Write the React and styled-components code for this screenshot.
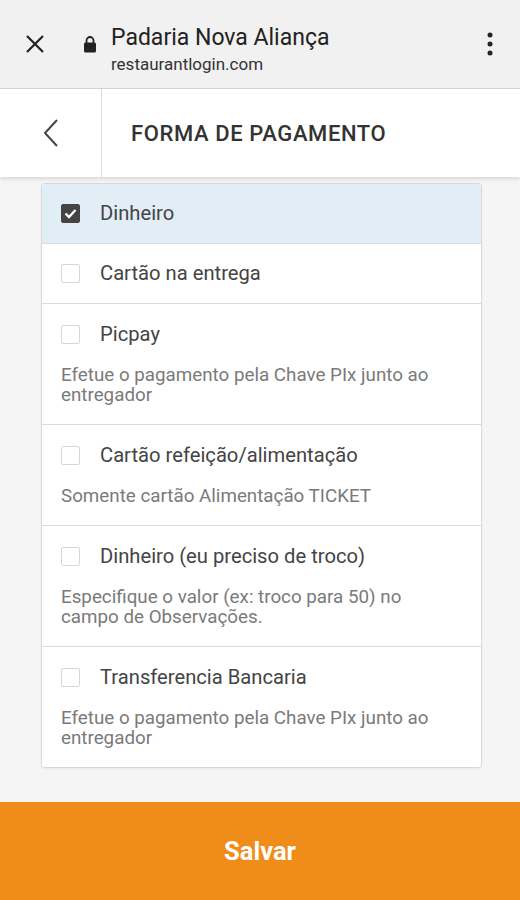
import React, { useState } from "react";
import styled, { createGlobalStyle } from "styled-components";

const Global = createGlobalStyle`
  html, body { margin: 0; padding: 0; }
  body { font-family: Roboto, "Noto Sans", Arial, sans-serif; background: #f5f5f5; }
  * { box-sizing: border-box; }
`;

const Page = styled.div`
  width: 520px;
  height: 900px;
  display: flex;
  flex-direction: column;
  background: #f5f5f5;
  overflow: hidden;
`;

const BrowserBar = styled.div`
  height: 89px;
  flex: none;
  background: #f1f1f1;
  border-bottom: 1px solid #d6d6d6;
  display: flex;
  align-items: center;
  padding: 0 0 0 22px;
`;

const IconBtn = styled.div`
  width: ${(p) => p.$w || 26}px;
  margin-left: ${(p) => p.$ml || 0}px;
  display: flex;
  align-items: center;
  justify-content: center;
  flex: none;
`;

const TitleBlock = styled.div`
  display: flex;
  flex-direction: column;
  margin-left: 8px;
  flex: 1;
  padding-top: 12px;
`;

const SiteTitle = styled.div`
  font-size: 23px;
  color: #222;
  line-height: 28px;
`;

const SiteUrl = styled.div`
  font-size: 17px;
  color: #333;
  line-height: 24px;
`;

const Header = styled.div`
  height: 88px;
  flex: none;
  background: #fff;
  display: flex;
  align-items: stretch;
  box-shadow: 0 2px 4px rgba(0, 0, 0, 0.12);
  position: relative;
  z-index: 1;
`;

const BackCell = styled.div`
  width: 102px;
  border-right: 1px solid #dcdcdc;
  display: flex;
  align-items: center;
  justify-content: center;
`;

const HeaderTitle = styled.div`
  display: flex;
  align-items: center;
  padding-left: 29px;
  font-size: 22px;
  font-weight: 500;
  color: #333;
  letter-spacing: 0.6px;
`;

const Content = styled.div`
  flex: 1;
  padding: 6px 38px 0 41px;
`;

const Card = styled.div`
  background: #fff;
  border: 1px solid #d9d9d9;
  border-radius: 4px;
  overflow: hidden;
  box-shadow: 0 1px 2px rgba(0, 0, 0, 0.05);
`;

const Option = styled.div`
  background: ${(p) => (p.$selected ? "#e2eef6" : "#fff")};
  border-top: ${(p) => (p.$first ? "none" : "1px solid #dcdcdc")};
  padding: ${(p) => (p.$hasDesc ? "18px 20px 19px 19px" : "17px 20px 18px 19px")};
  cursor: pointer;
`;

const OptionRow = styled.div`
  display: flex;
  align-items: center;
  height: 24px;
`;

const Box = styled.span`
  width: 19px;
  height: 19px;
  border-radius: 2px;
  border: 1px solid ${(p) => (p.$checked ? "#444" : "#d7d7d7")};
  background: ${(p) => (p.$checked ? "#444" : "#fff")};
  display: inline-flex;
  align-items: center;
  justify-content: center;
  flex: none;
`;

const Label = styled.span`
  margin-left: 20px;
  font-size: 20.2px;
  color: #444;
`;

const Desc = styled.div`
  margin-top: 19px;
  font-size: 18.8px;
  line-height: 20px;
  color: #7a7a7a;
  max-width: 384px;
`;

const Footer = styled.div`
  padding-top: 34px;
`;

const SaveButton = styled.button`
  width: 100%;
  height: 98px;
  border: none;
  background: #ef8c1a;
  color: #fff;
  font-family: Roboto, Arial, sans-serif;
  font-size: 25.5px;
  font-weight: 700;
  cursor: pointer;
  padding: 0;
`;

const options = [
  { label: "Dinheiro" },
  { label: "Cartão na entrega" },
  { label: "Picpay", desc: "Efetue o pagamento pela Chave PIx junto ao entregador" },
  { label: "Cartão refeição/alimentação", desc: "Somente cartão Alimentação TICKET" },
  { label: "Dinheiro (eu preciso de troco)", desc: "Especifique o valor (ex: troco para 50) no campo de Observações." },
  { label: "Transferencia Bancaria", desc: "Efetue o pagamento pela Chave PIx junto ao entregador" },
];

export default function App() {
  const [sel, setSel] = useState(0);
  return (
    <Page>
      <Global />
      <BrowserBar>
        <IconBtn $w={26}>
          <svg width="20" height="20" viewBox="0 0 20 20">
            <path d="M2 2 L18 18 M18 2 L2 18" stroke="#222" strokeWidth="2.2" fill="none" />
          </svg>
        </IconBtn>
        <IconBtn $w={26} $ml={29}>
          <svg width="14" height="18" viewBox="0 0 14 18">
            <path d="M3.5 8 V5.5 a3.5 3.5 0 0 1 7 0 V8" stroke="#222" strokeWidth="1.8" fill="none" />
            <rect x="1" y="7.5" width="12" height="10" rx="1.5" fill="#222" />
          </svg>
        </IconBtn>
        <TitleBlock>
          <SiteTitle>Padaria Nova Aliança</SiteTitle>
          <SiteUrl>restaurantlogin.com</SiteUrl>
        </TitleBlock>
        <IconBtn $w={60}>
          <svg width="6" height="24" viewBox="0 0 6 24">
            <circle cx="3" cy="3" r="2.5" fill="#222" />
            <circle cx="3" cy="12" r="2.5" fill="#222" />
            <circle cx="3" cy="21" r="2.5" fill="#222" />
          </svg>
        </IconBtn>
      </BrowserBar>
      <Header>
        <BackCell>
          <svg width="18" height="30" viewBox="0 0 18 30">
            <path d="M15 2 L3 15 L15 28" stroke="#444" strokeWidth="2" fill="none" />
          </svg>
        </BackCell>
        <HeaderTitle>FORMA DE PAGAMENTO</HeaderTitle>
      </Header>
      <Content>
        <Card>
          {options.map((o, i) => (
            <Option key={i} $first={i === 0} $selected={sel === i} $hasDesc={!!o.desc} onClick={() => setSel(i)}>
              <OptionRow>
                <Box $checked={sel === i}>
                  {sel === i && (
                    <svg width="13" height="11" viewBox="0 0 13 11">
                      <path d="M1.5 5.5 L5 9 L11.5 2" stroke="#fff" strokeWidth="2.4" fill="none" />
                    </svg>
                  )}
                </Box>
                <Label>{o.label}</Label>
              </OptionRow>
              {o.desc && <Desc>{o.desc}</Desc>}
            </Option>
          ))}
        </Card>
      </Content>
      <Footer>
        <SaveButton>Salvar</SaveButton>
      </Footer>
    </Page>
  );
}
